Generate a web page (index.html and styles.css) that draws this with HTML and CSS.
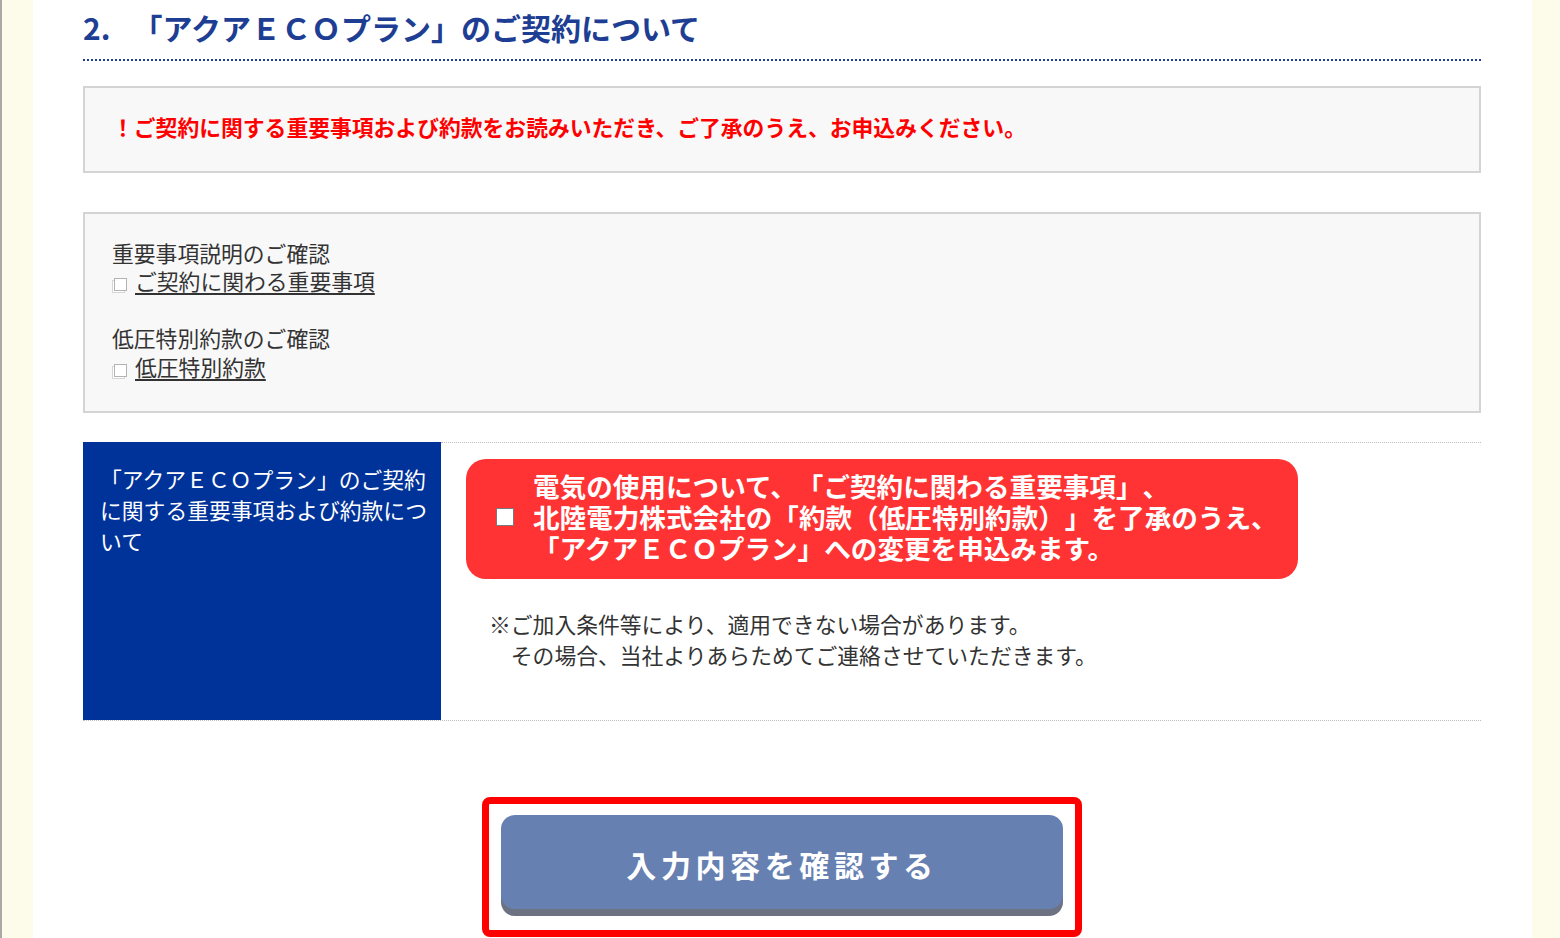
FILE: index.html
```html
<!DOCTYPE html>
<html lang="ja">
<head>
<meta charset="utf-8">
<title>アクアＥＣＯプランのご契約について</title>
<link rel="stylesheet" href="styles.css">
</head>
<body>
<div class="page">
  <main class="content">
    <h2 class="sec-title"><span class="num">2.</span>「アクアＥＣＯプラン」のご契約について</h2>

    <div class="notice">！ご契約に関する重要事項および約款をお読みいただき、ご了承のうえ、お申込みください。</div>

    <div class="docs">
      <div class="doc">
        <p class="doc-label">重要事項説明のご確認</p>
        <p class="doc-link"><svg class="ico" viewBox="0 0 16 16" width="16" height="16"><rect x="0.5" y="3.5" width="12" height="12" fill="#fff" stroke="#d6d6d6"/><rect x="2.5" y="1.5" width="12" height="12" fill="#fff" stroke="#b3b3b3"/></svg><a href="#">ご契約に関わる重要事項</a></p>
      </div>
      <div class="doc">
        <p class="doc-label">低圧特別約款のご確認</p>
        <p class="doc-link"><svg class="ico" viewBox="0 0 16 16" width="16" height="16"><rect x="0.5" y="3.5" width="12" height="12" fill="#fff" stroke="#d6d6d6"/><rect x="2.5" y="1.5" width="12" height="12" fill="#fff" stroke="#b3b3b3"/></svg><a href="#">低圧特別約款</a></p>
      </div>
    </div>

    <div class="agree-row">
      <div class="agree-head">「アクアＥＣＯプラン」のご契約に関する重要事項および約款について</div>
      <div class="agree-body">
        <label class="agree-box"><span class="check"></span><span class="agree-text">電気の使用について、「ご契約に関わる重要事項」、<br>北陸電力株式会社の「約款（低圧特別約款）」を了承のうえ、<br>「アクアＥＣＯプラン」への変更を申込みます。</span></label>
        <p class="note">※ご加入条件等により、適用できない場合があります。<br>　その場合、当社よりあらためてご連絡させていただきます。</p>
      </div>
    </div>

    <div class="submit-wrap">
      <div class="submit-frame">
        <button class="submit" type="button">入力内容を確認する</button>
      </div>
    </div>
  </main>
</div>
</body>
</html>
```

FILE: styles.css
```css
html, body {
  margin: 0;
  padding: 0;
  overflow: hidden;
}

body {
  background: #fdfbea;
  font-family: "Noto Sans CJK JP", "Noto Sans", sans-serif;
  text-spacing-trim: space-all;
  color: #333;
}

.page {
  display: flex;
  height: 938px;
  border-left: 2px solid #a9a9a9;
  padding-left: 31px;
}

.content {
  width: 1499px;
  box-sizing: border-box;
  background: #fff;
  padding: 0 51px 0 50px;
}

.sec-title {
  margin: 0;
  padding: 6px 0 11px;
  font-size: 30px;
  line-height: 42px;
  font-weight: bold;
  color: #1d3e93;
  border-bottom: 2px dotted #1d3e93;
}

.sec-title .num {
  display: inline-block;
  margin-right: 22px;
}

.notice {
  margin-top: 25px;
  background: #f8f8f8;
  border: 2px solid #d4d4d4;
  padding: 23px 27px 29px;
  font-size: 21.8px;
  line-height: 31px;
  font-weight: bold;
  color: #ff0000;
}

.docs {
  margin-top: 39px;
  background: #f8f8f8;
  border: 2px solid #d4d4d4;
  padding: 24.5px 27px 29.5px;
  font-size: 21.8px;
  line-height: 28.5px;
  color: #333;
}

.doc + .doc {
  margin-top: 28.5px;
}

.doc p {
  margin: 0;
}

.ico {
  display: inline-block;
  vertical-align: -3px;
  margin-right: 7px;
}

.doc-link a {
  color: #333;
  text-decoration: underline;
  text-underline-offset: 3px;
}

.agree-row {
  margin-top: 29px;
  display: grid;
  grid-template-columns: 358px 1fr;
  border-bottom: 1px dotted #bdbdbd;
}

.agree-head {
  background: #003399;
  color: #fff;
  padding: 21px 10px 0 17px;
  font-size: 21.8px;
  line-height: 31px;
}

.agree-body {
  border-top: 1px dotted #bdbdbd;
  padding: 16px 25px 50px;
}

.agree-box {
  display: flex;
  align-items: center;
  gap: 19px;
  width: 832px;
  box-sizing: border-box;
  padding: 11.5px 20px 15.5px 30px;
  background: #ff3333;
  border-radius: 20px;
  color: #fff;
  font-weight: bold;
  font-size: 26.6px;
  line-height: 31px;
  white-space: nowrap;
}

.check {
  flex: none;
  width: 18px;
  height: 18px;
  box-sizing: border-box;
  background: #fff;
  border: 1px solid #7a7a7a;
}

.note {
  margin: 29px 0 0 23px;
  font-size: 21.8px;
  line-height: 31px;
  color: #333;
}

.submit-wrap {
  margin-top: 76px;
  display: flex;
  justify-content: center;
}

.submit-frame {
  width: 600px;
  box-sizing: border-box;
  border: 7px solid #ff0000;
  border-radius: 8px;
  padding: 11px 12px 21px;
}

.submit {
  display: block;
  width: 100%;
  height: 94px;
  border: 0;
  border-radius: 14px;
  background: #6780b2;
  box-shadow: 0 7px 0 #6c7282;
  color: #fff;
  font-family: "Noto Sans CJK JP", "Noto Sans", sans-serif;
  font-size: 30px;
  font-weight: bold;
  letter-spacing: 4.6px;
  padding: 4px 0 0;
  cursor: pointer;
}
```
